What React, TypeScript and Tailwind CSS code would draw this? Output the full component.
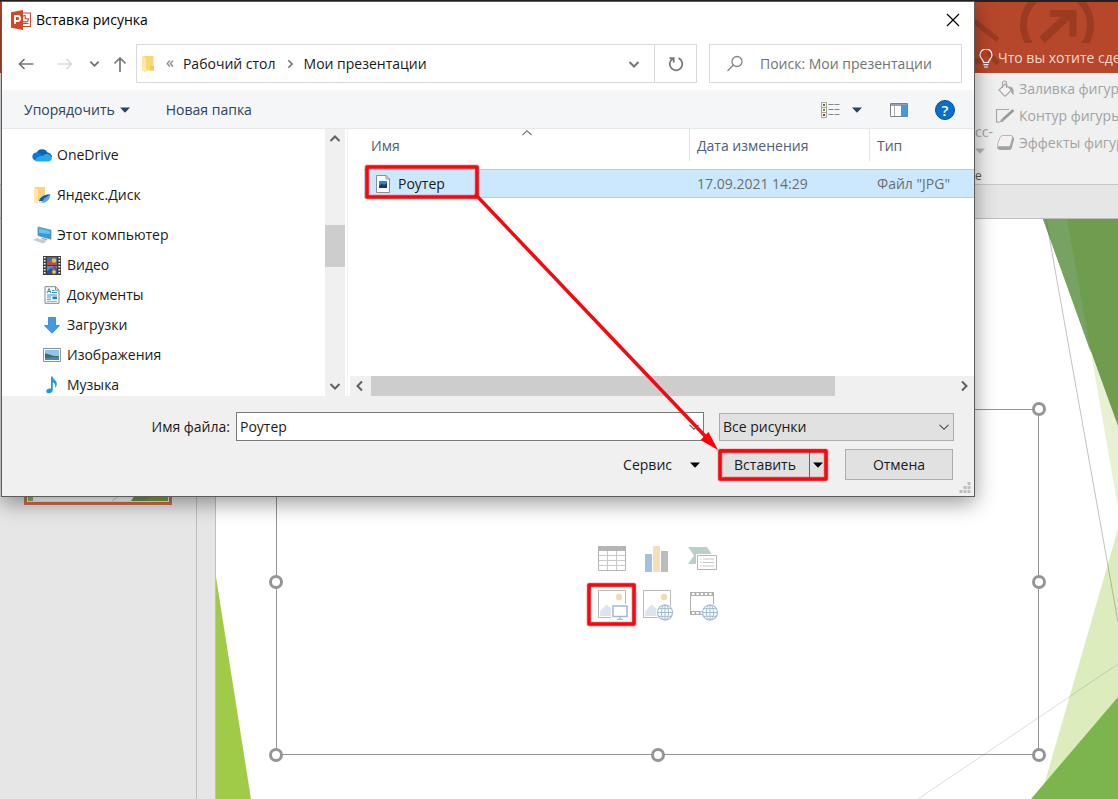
import React from "react";

type IconProps = { className?: string };

const Chevron = ({ className = "" }: IconProps) => (
  <svg viewBox="0 0 12 12" className={`size-3 shrink-0 ${className}`} fill="none" stroke="currentColor" strokeWidth="2" aria-hidden="true">
    <path d="M1.5 4 6 8.500 10.500 4" />
  </svg>
);

const ThinChevron = ({ className = "" }: IconProps) => (
  <svg viewBox="0 0 12 12" className={`size-3 shrink-0 ${className}`} fill="none" stroke="currentColor" strokeWidth="1.1" aria-hidden="true">
    <path d="M1.5 3.8 6 8.3 10.5 3.8" />
  </svg>
);

const Caret = ({ className = "" }: IconProps) => (
  <svg viewBox="0 0 10 6" className={`h-[6px] w-[10px] shrink-0 ${className}`} fill="currentColor" aria-hidden="true">
    <path d="M0 .5h10L5 5.7Z" />
  </svg>
);

const PowerPointIcon = () => (
  <svg viewBox="0 0 20 20" className="size-5 shrink-0" aria-hidden="true">
    <rect x="9.5" y="3" width="10" height="13.5" fill="#fff" stroke="#d24726" />
    <path d="M14.2 5.5v3.2h3.2a3.2 3.2 0 1 1-3.2-3.2Z" fill="none" stroke="#d24726" strokeWidth="1.1" />
    <path d="M12 13.5h5.5" stroke="#d24726" strokeWidth="1.2" />
    <path d="M0 2.2 12 0v20L0 17.8Z" fill="#d24726" />
    <path d="M4 14V6h2.6a2.5 2.5 0 0 1 0 5H4" fill="none" stroke="#fff" strokeWidth="1.8" />
  </svg>
);

const FolderIcon = () => (
  <svg viewBox="0 0 14 18" className="h-[18px] w-[14px] shrink-0" aria-hidden="true">
    <path d="M2 1h10.5v14.5H2Z" fill="#f7d873" />
    <path d="M1 1.5 5 3v14.5L1 15.6Z" fill="#ffe9a2" />
    <path d="M9 11h4v4.5H9Z" fill="#f1ca58" />
  </svg>
);

const OneDriveIcon = () => (
  <svg viewBox="0 0 20 14" className="h-[14px] w-5 shrink-0" aria-hidden="true">
    <path d="M4.5 5a6 6 0 0 1 11-.5c2.5.2 4.5 2 4.5 4.5L10 12 1 9Z" fill="#0364b8" />
    <path d="M4.6 4.4c3 0 5 1.600 7.400 3.600L3 12.500A4.200 4.200 0 0 1 4.600 4.400Z" fill="#0f78d4" />
    <path d="M3 12.500c1-3 4.500-5 8-4.500 2-3 7.500-2.500 8.500 1 1 2-.5 4.400-3 4.400H4.400c-.6 0-1-.3-1.400-.9Z" fill="#28a8ea" />
  </svg>
);

const YandexIcon = () => (
  <svg viewBox="0 0 18 18" className="size-[18px] shrink-0" aria-hidden="true">
    <path d="M2 1h10v14H2Z" fill="#f7d47a" />
    <path d="M1 1.500 5 3v15L1 16Z" fill="#ffe8a8" />
    <path d="M5.500 17C6 11 11 8 17.500 8.500 17 14 12 17.500 5.500 17Z" fill="#cfe6f8" />
    <path d="M6 15c1-4.500 6-7 11.500-6.500-1 2-5 1.500-7 6.500Z" fill="#1358a8" />
    <path d="M9 17c.5-4 4-6.500 8-7-.5 4-3.500 6.500-8 7Z" fill="#55a9e8" />
  </svg>
);

const ComputerIcon = () => (
  <svg viewBox="0 0 20 18" className="h-[18px] w-5 shrink-0" aria-hidden="true">
    <path d="M6 1 19 4.200v9L6 9.600Z" fill="#2d9de0" stroke="#6c8aa0" strokeWidth=".8" />
    <path d="m7 2.200 11 2.800v3L7 7Z" fill="#64c2f3" />
    <path d="m1 14 4-2 10 3-4 2.500Z" fill="#c5cbd2" />
    <path d="M9 11.500 15 13v1.500l-5-1.500Z" fill="#9aa3ad" />
  </svg>
);

const VideoIcon = () => (
  <svg viewBox="0 0 18 19" className="h-[19px] w-[18px] shrink-0" aria-hidden="true">
    <path d="M0 0h18v19H0Z" fill="#3c3c3c" />
    <path d="M1.700 1v18M16.300 1v18" stroke="#eee" strokeWidth="1.800" strokeDasharray="1.600 1.400" />
    <path d="M4 1h10v8H4Z" fill="#3f6db5" />
    <path d="M4 10h10v8H4Z" fill="#4c8be0" />
    <path d="M4 6 7 4l3 2 4 1v2H4Z" fill="#c8463a" />
    <circle cx="11" cy="4.500" r="2.300" fill="#e8c62f" />
    <path d="m4 15 4-3 3 2 3-2v6H4Z" fill="#2c4f96" />
    <circle cx="11" cy="16" r="2" fill="#e8c62f" />
    <path d="m9 12 3-2 2 3Z" fill="#a6302c" />
  </svg>
);

const DocumentIcon = () => (
  <svg viewBox="0 0 16 18" className="h-[18px] w-4 shrink-0" aria-hidden="true">
    <path d="M1 .7h10.500l3.500 3.500v13.100H1Z" fill="#fff" stroke="#808890" />
    <path d="M11.500.7v3.500H15" fill="none" stroke="#808890" />
    <path d="m3 7 2-4.500L7 7M4 5.500h2.500M8 4.500h2.500M8 6.500h5M3 9h10M3 11h4M3 13.200h4" stroke="#2d8fd0" strokeWidth="1" fill="none" />
    <path d="M8.500 10.500H13v2.700H8.500Z" fill="#2d74b8" />
    <path d="M3 15.300h10" stroke="#9aa0a6" />
  </svg>
);

const DownloadIcon = () => (
  <svg viewBox="0 0 16 17" className="h-[17px] w-4 shrink-0" aria-hidden="true">
    <path d="M4.500.5h7v8h4L8 16.300.5 8.500h4Z" fill="#3f9be8" stroke="#2f7fcb" strokeWidth=".8" />
  </svg>
);

const ImagesIcon = () => (
  <svg viewBox="0 0 18 14" className="h-[14px] w-[18px] shrink-0" aria-hidden="true">
    <path d="M.5.5h17v13H.5Z" fill="#fff" stroke="#8b949c" />
    <path d="M2 2h14v10H2Z" fill="#8fc4f0" />
    <path d="M2 5.500c4 0 6 3 14 2.500V12H2Z" fill="#3a6c68" />
    <path d="M2 10c5-1 9-1 14-1v3H2Z" fill="#4a86b8" />
  </svg>
);

const MusicIcon = () => (
  <svg viewBox="0 0 14 18" className="h-[18px] w-[14px] shrink-0" aria-hidden="true">
    <path d="M6 .5h1.600c.4 3 4.400 4 4.200 7.500 0 1.800-.8 3-1.600 4 .4-3-.4-5-2.400-5.800v7.600c0 2-1.800 3.500-4 3.500-1.600 0-2.600-1-2.600-2.100 0-1.800 2.200-3.100 4.800-2.700Z" fill="#1a9be6" />
  </svg>
);

const JpgIcon = () => (
  <svg viewBox="0 0 14 18" className="h-[18px] w-[14px] shrink-0" aria-hidden="true">
    <path d="M.5.5h9.500l3.500 3.500v13.500H.5Z" fill="#fff" stroke="#8a8f94" />
    <path d="M10 .5V4h3.500" fill="none" stroke="#8a8f94" />
    <path d="M3 6h8v7H3Z" fill="#2a8ad8" />
    <path d="m3 11 3-2.500 2 1.500 3-2v5H3Z" fill="#153a6e" />
  </svg>
);

const GlobeShape = () => (
  <g fill="none" stroke="#9fbad6">
    <circle cx="23" cy="22.500" r="7.500" fill="#fff" strokeWidth="1.200" />
    <ellipse cx="23" cy="22.500" rx="3.600" ry="7.500" />
    <path d="M23 15v15M15.500 22.500h15M16.800 18.700h12.400M16.800 26.300h12.400" />
  </g>
);

const TableIcon = () => (
  <svg viewBox="0 0 30 30" className="size-[30px]" aria-hidden="true">
    <path d="M1.500 2.500h27v24h-27Z" fill="#fff" stroke="#b5b5b5" />
    <path d="M1 2h28v5H1Z" fill="#b5b5b5" />
    <path d="M1.500 11.500h27M1.500 16.500h27M1.500 21.500h27M10.500 7v19M19.500 7v19" stroke="#c9c9c9" />
  </svg>
);

const ChartIcon = () => (
  <svg viewBox="0 0 30 30" className="size-[30px]" aria-hidden="true">
    <path d="M3 10h7v18H3Z" fill="#a5bfdc" />
    <path d="M11 2h7v26h-7Z" fill="#f3dfb8" />
    <path d="M19 7h7v21h-7Z" fill="#bcbcbc" />
  </svg>
);

const SmartArtIcon = () => (
  <svg viewBox="0 0 30 30" className="size-[30px]" aria-hidden="true">
    <path d="M1 3h19l5.500 8H14v9H1l6-8.500Z" fill="#b9d0c8" />
    <path d="M9 10h22v17H9Z" fill="#fff" />
    <path d="M10.500 11.500h19v14h-19Z" fill="#fff" stroke="#b5b5b5" />
    <path d="M13 15h1.500M13 18.500h1.500M13 22h1.500M16 15h11M16 18.500h11M16 22h11" stroke="#c6c6c6" />
  </svg>
);

const PictureShape = () => (
  <g>
    <path d="M1.500.5h27v27h-27Z" fill="#fff" stroke="#b9b9b9" />
    <circle cx="22" cy="7" r="3.200" fill="#f1dcb2" />
    <path d="m3 26 .2-5L9.500 14.500 15 19v7Z" fill="#dde4f0" />
  </g>
);

const PictureIcon = () => (
  <svg viewBox="0 0 30 30" className="size-[30px] overflow-visible" aria-hidden="true">
    <PictureShape />
    <path d="M14 14h17v16H14Z" fill="#fff" />
    <path d="M16 16h14v10.500H16Z" fill="#fff" stroke="#9fbad6" strokeWidth="1.600" />
    <path d="M23 27v2M20 29.300h6" stroke="#9fbad6" strokeWidth="1.300" />
  </svg>
);

const OnlinePictureIcon = () => (
  <svg viewBox="0 0 30 30" className="size-[30px] overflow-visible" aria-hidden="true">
    <PictureShape />
    <circle cx="23" cy="22.500" r="9" fill="#fff" />
    <GlobeShape />
  </svg>
);

const FilmIcon = () => (
  <svg viewBox="0 0 30 30" className="size-[30px] overflow-visible" aria-hidden="true">
    <path d="M3.500 2.500h23v22h-23Z" fill="#fff" stroke="#b0b0b0" />
    <path d="M3 2h24v4H3ZM3 21h24v4H3Z" fill="#b0b0b0" />
    <path d="M5 4h21M5 23h21" stroke="#fff" strokeWidth="2" strokeDasharray="2.500 1.800" />
    <circle cx="23.500" cy="22.500" r="9" fill="#fff" />
    <GlobeShape />
  </svg>
);

const folders = [
  { name: "OneDrive", icon: <OneDriveIcon />, style: "pl-[30px] mb-[10px]" },
  { name: "Яндекс.Диск", icon: <YandexIcon />, style: "pl-[30px] mb-[10px]" },
  { name: "Этот компьютер", icon: <ComputerIcon />, style: "pl-[30px]" },
  { name: "Видео", icon: <VideoIcon />, style: "pl-10" },
  { name: "Документы", icon: <DocumentIcon />, style: "pl-10" },
  { name: "Загрузки", icon: <DownloadIcon />, style: "pl-10" },
  { name: "Изображения", icon: <ImagesIcon />, style: "pl-10" },
  { name: "Музыка", icon: <MusicIcon />, style: "pl-10" },
];

const handles = [
  "left-0 top-0",
  "left-1/2 top-0",
  "left-full top-0",
  "left-0 top-1/2",
  "left-full top-1/2",
  "left-0 top-full",
  "left-1/2 top-full",
  "left-full top-full",
];

const inserts = [
  { label: "Вставить таблицу", icon: <TableIcon /> },
  { label: "Вставить диаграмму", icon: <ChartIcon /> },
  { label: "Вставить рисунок SmartArt", icon: <SmartArtIcon /> },
  { label: "Рисунки", icon: <PictureIcon /> },
  { label: "Изображения из Интернета", icon: <OnlinePictureIcon /> },
  { label: "Вставить видео", icon: <FilmIcon /> },
];

function TitleBar() {
  return (
    <header className="relative flex h-[73px] shrink-0 items-end overflow-hidden border-t-2 border-[#222] bg-[#b7472a]">
      <svg viewBox="0 0 144 71" className="absolute top-0 right-0 h-[71px] w-36" fill="none" stroke="#9c3b22" aria-hidden="true">
        <clipPath id="band">
          <path d="M0 0h144v41H0Z" />
        </clipPath>
        <g clipPath="url(#band)">
          <circle cx="83" cy="23" r="33.500" strokeWidth="7" />
          <path d="M68 38 97 11" strokeWidth="8" />
          <path d="M76 11.500h23v23" strokeWidth="7" />
        </g>
        <path d="m0 19 24 19" strokeWidth="5" />
        <path d="m14 50 10 12M0 59h8" strokeWidth="5" />
      </svg>
      <a href="#help" className="relative ml-auto flex h-[30px] w-[143px] items-center gap-[5px] pl-1 text-sm whitespace-nowrap text-[#f6d8ce]">
        <svg viewBox="0 0 14 19" className="h-[19px] w-[14px] shrink-0" fill="none" stroke="#fff" strokeWidth="1.200" aria-hidden="true">
          <path d="M4.500 13.500c0-3-3.500-4-3.500-7.500a6 6 0 0 1 12 0c0 3.500-3.500 4.500-3.500 7.500ZM4.500 15.700h5M5 18h4" />
        </svg>
        Что вы хотите сделать?
      </a>
    </header>
  );
}

function Ribbon() {
  return (
    <div className="flex h-28 shrink-0 justify-end border-b border-[#c6c6c6] bg-[#f0f0f0] text-[#a3a3a3]">
      <div className="flex w-[143px] overflow-hidden">
        <div className="flex w-5 shrink-0 flex-col items-start pt-[49px] leading-5">
          <span className="text-sm">сс-</span>
          <Caret className="mt-[6px] h-1 w-[6px] text-[#b5b5b5]" />
          <span className="mt-[14px] text-xs text-[#555]">е</span>
        </div>
        <div className="flex flex-col gap-[3px] pt-1 text-sm leading-6 whitespace-nowrap">
          <button type="button" className="flex h-6 items-center gap-1">
            <svg viewBox="0 0 20 18" className="h-[18px] w-5" fill="none" stroke="#a8a8a8" strokeWidth="1.200" aria-hidden="true">
              <path d="m10 4 6.500 6L10 16.500 4 10Z" fill="#f7f1f7" />
              <path d="M7.500 8V3a2 2 0 0 1 4 0v5" />
              <path d="M14.500 7c3 0 4 3 3.500 7C17 13 17 11 14.500 7Z" fill="#999" />
            </svg>
            Заливка фигуры
          </button>
          <button type="button" className="flex h-6 items-center gap-1">
            <svg viewBox="0 0 20 18" className="h-[18px] w-5" fill="none" stroke="#a8a8a8" aria-hidden="true">
              <path d="M14 2.500H1.500v12.500H5" strokeWidth="1.200" />
              <path d="M8 12.500 18.500 3" stroke="#999" strokeWidth="2.800" />
              <path d="m5.500 15 1.200-3 1.800 1.800Z" fill="#999" />
            </svg>
            Контур фигуры
          </button>
          <button type="button" className="flex h-6 items-center gap-1">
            <svg viewBox="0 0 20 18" className="h-[18px] w-5" aria-hidden="true">
              <path d="M17 2.500q2.500.5 2 3l-2 8q-.5 2.500-3 2.500H5.500q-3 0-3.500-3Z" fill="#a3a3a3" />
              <path d="M8 1.500h8q2 0 1.500 2l-2 7.500q-.5 1.500-2 1.500H4q-2 0-1.500-2L5 3.500q.7-2 3-2Z" fill="#f4f0f4" stroke="#b0b0b0" strokeWidth=".9" />
            </svg>
            Эффекты фигуры
          </button>
        </div>
      </div>
    </div>
  );
}

function Slide() {
  return (
    <main className="relative ml-[18px] min-w-0 flex-1 border-l border-[#c0c0c0] bg-white">
      <svg viewBox="216 219 902 580" preserveAspectRatio="xMaxYMin slice" className="absolute inset-0 h-full w-full" aria-hidden="true">
        <path d="M216 577v222h35Z" fill="#a0cb48" />
        <path d="M1091 353 1118 425v83Z" fill="#e8f2d3" />
        <path d="M1043 219h75v207Z" fill="#709c4e" />
        <path d="M1043 219h24l24 134Z" fill="#77a362" />
        <path d="M1118 529v270h-78Z" fill="#dcecbd" />
        <path d="M1118 697v102h-87Z" fill="#7cb54e" />
        <path d="m1046 219 72 403" stroke="#606860" strokeOpacity=".4" />
        <path d="m918 799 200-135" stroke="#707870" strokeOpacity=".25" />
      </svg>
      <section className="absolute top-[190px] right-[79px] bottom-11 left-[60px] grid place-items-center border border-[#939393] pr-px">
        <div className="absolute -inset-px">
          {handles.map((place) => (
            <span key={place} className={`absolute size-[14px] -translate-x-1/2 -translate-y-1/2 rounded-full border-[3px] border-[#959595] bg-white ${place}`} />
          ))}
        </div>
        <div className="relative grid grid-cols-3 gap-x-[15px] gap-y-4">
          {inserts.map((item) => (
            <button key={item.label} type="button" aria-label={item.label} className="size-[30px]">
              {item.icon}
            </button>
          ))}
        </div>
      </section>
    </main>
  );
}

function InsertDialog() {
  return (
    <div role="dialog" aria-labelledby="dialog-title" className="absolute top-px left-px flex w-[974px] flex-col border border-[#5c5c5c] bg-white text-sm shadow-[0_6px_20px_rgba(0,0,0,0.4)]">
      <div className="flex h-9 items-center gap-[5px] pr-[14px] pl-[9px]">
        <PowerPointIcon />
        <h1 id="dialog-title" className="flex-1 text-black">Вставка рисунка</h1>
        <button type="button" aria-label="Закрыть">
          <svg viewBox="0 0 14 14" className="size-[14px]" stroke="#000" strokeWidth="1.200" aria-hidden="true">
            <path d="m1 1 12 12M13 1 1 13" />
          </svg>
        </button>
      </div>

      <div className="flex items-center pt-[6px] pr-3 pb-[7px] pl-4 text-[#6e6e6e]">
        <button type="button" aria-label="Назад">
          <svg viewBox="0 0 16 16" className="size-4" fill="none" stroke="#777" strokeWidth="1.700" aria-hidden="true">
            <path d="M15.500 8H1.500M6.500 3l-5 5 5 5" />
          </svg>
        </button>
        <button type="button" aria-label="Вперёд" className="ml-[23px]">
          <svg viewBox="0 0 16 16" className="size-4" fill="none" stroke="#dadada" strokeWidth="1.700" aria-hidden="true">
            <path d="M.5 8h14M9.500 3l5 5-5 5" />
          </svg>
        </button>
        <button type="button" aria-label="Последние расположения" className="ml-4">
          <Chevron className="size-[11px]" />
        </button>
        <button type="button" aria-label="Вверх" className="ml-3">
          <svg viewBox="0 0 16 16" className="size-4" fill="none" stroke="#777" strokeWidth="1.700" aria-hidden="true">
            <path d="M8 16V2M2.500 7.500 8 2l5.500 5.500" />
          </svg>
        </button>
        <nav aria-label="Адрес" className="ml-2 flex h-[39px] flex-1 items-center border border-[#d9d9d9] pl-1 text-[#1a1a1a]">
          <FolderIcon />
          <span className="ml-[11px] pb-[3px] text-base leading-5 text-[#777]">«</span>
          <button type="button" className="ml-[9px]">Рабочий стол</button>
          <Chevron className="mx-[9px] size-[10px] -rotate-90 text-[#777]" />
          <button type="button">Мои презентации</button>
          <button type="button" aria-label="Показать адреса" className="ml-auto px-[14px] text-[#777]">
            <Chevron />
          </button>
          <button type="button" aria-label="Обновить" className="grid h-full w-[42px] place-items-center border-l border-[#d9d9d9]">
            <svg viewBox="0 0 16 16" className="size-4" fill="none" stroke="#777" strokeWidth="1.800" aria-hidden="true">
              <path d="M10.500 2.200A6.300 6.300 0 1 1 4.500 2.800M1.500 2.200h4.200v4.200" />
            </svg>
          </button>
        </nav>
        <label className="ml-3 flex h-[39px] w-[253px] items-center border border-[#d9d9d9] pl-4">
          <svg viewBox="0 0 18 18" className="size-[18px] shrink-0" fill="none" stroke="#858585" strokeWidth="1.300" aria-hidden="true">
            <circle cx="11" cy="6.500" r="5" />
            <path d="M7.300 10 1.500 16" />
          </svg>
          <input aria-label="Поиск" placeholder="Поиск: Мои презентации" className="ml-4 w-full min-w-0 outline-none placeholder:text-[#727272]" />
        </label>
      </div>

      <div className="flex h-[39px] items-center border-b border-[#e6e7e8] bg-[#f4f6f8] pt-[2px] pr-[19px] pl-[22px] text-[#2b4262]">
        <button type="button" className="flex items-center gap-[5px]">
          Упорядочить
          <Caret className="h-[5px] w-2" />
        </button>
        <button type="button" className="ml-9">Новая папка</button>
        <button type="button" aria-label="Вид" className="ml-auto flex items-center gap-3">
          <svg viewBox="0 0 19 16" className="h-4 w-[19px]" fill="none" aria-hidden="true">
            <path d="M.5.500h5v15h-5ZM.5 5.500h5M.5 10.500h5" stroke="#a5a595" />
            <path d="M2 2h2v2H2Z" fill="#4b7c4b" />
            <path d="M2 7h2v2H2Z" fill="#5f963f" />
            <path d="M2 12h2v2H2Z" fill="#a3352b" />
            <path d="M7.500 2.500h11M7.500 7.500h11M7.500 12.500h11" stroke="#858585" strokeDasharray="5 1" />
          </svg>
          <Caret className="h-[5px] w-2" />
        </button>
        <button type="button" aria-label="Область просмотра" className="ml-7">
          <svg viewBox="0 0 18 14" className="h-[14px] w-[18px]" aria-hidden="true">
            <path d="M.5.5h17v13H.5Z" fill="#fff" stroke="#7b8288" />
            <path d="M1 1h16v2H1Z" fill="#9aa1a7" />
            <path d="M4.500 3v10" stroke="#aab" />
            <path d="M11 2h6.500v11.500H11Z" fill="#3f9ae6" />
          </svg>
        </button>
        <button type="button" aria-label="Справка" className="ml-[27px] grid size-5 place-items-center rounded-full border border-[#0a4c8c] bg-[#0a6ed0] text-[15px] leading-none font-semibold text-white">
          ?
        </button>
      </div>

      <div className="flex h-[267px]">
        <ul className="flex-1 overflow-hidden pt-[11px] text-[#1a1a1a]">
          {folders.map((folder) => (
            <li key={folder.name} className={folder.style}>
              <button type="button" className="flex h-[30px] items-center gap-[5px]">
                <span className="flex w-5 justify-center">{folder.icon}</span>
                {folder.name}
              </button>
            </li>
          ))}
        </ul>
        <div className="flex w-5 flex-col items-center bg-[#f0f0f0] text-[#606060]">
          <Chevron className="mt-1 rotate-180" />
          <div className="mt-20 h-[42px] w-full bg-[#cdcdcd]" />
          <Chevron className="mt-auto mb-1" />
        </div>
        <div className="ml-[2px] flex w-[627px] flex-col border-l border-[#f0f0f0]">
          <div className="relative flex-1 pl-4">
            <ThinChevron className="absolute top-[-2px] left-[173px] rotate-180 text-[#666]" />
            <table className="w-full table-fixed border-collapse text-left">
              <thead className="text-[#4c607a]">
                <tr>
                  <th className="w-[326px] p-0 pb-2 font-normal">
                    <div className="flex h-8 items-center border-r border-[#e2e2e2] pt-[2px] pl-[7px]">Имя</div>
                  </th>
                  <th className="w-[180px] p-0 pb-2 font-normal">
                    <div className="flex h-8 items-center border-r border-[#e2e2e2] pt-[2px] pl-[7px]">Дата изменения</div>
                  </th>
                  <th className="p-0 pb-2 font-normal">
                    <div className="flex h-8 items-center pt-[2px] pl-[7px]">Тип</div>
                  </th>
                </tr>
              </thead>
              <tbody>
                <tr className="h-7 border-y border-[#a5d2ee] bg-[#cce8ff] text-[#6d6d6d]">
                  <td className="p-0 pl-3">
                    <div className="flex items-center gap-2 text-[#1a1a1a]">
                      <JpgIcon />
                      Роутер
                    </div>
                  </td>
                  <td className="p-0 pl-[7px]">17.09.2021 14:29</td>
                  <td className="p-0 pl-[7px]">Файл "JPG"</td>
                </tr>
              </tbody>
            </table>
          </div>
          <div className="ml-[2px] flex h-5 items-center bg-[#f0f0f0] text-[#606060]">
            <Chevron className="ml-1 rotate-90" />
            <div className="ml-[5px] h-full w-[464px] bg-[#cdcdcd]" />
            <Chevron className="mr-1 ml-auto -rotate-90" />
          </div>
        </div>
      </div>

      <div className="flex flex-col gap-2 bg-[#f0f0f0] pt-4 pb-4 text-[#1a1a1a]">
        <div className="flex h-[29px] items-center justify-end pr-5">
          <label htmlFor="file-name">Имя файла:</label>
          <div className="relative ml-[6px] h-full w-[468px]">
            <input id="file-name" defaultValue="Роутер" className="h-full w-full border border-[#7a7a7a] bg-white pr-6 pl-[3px] outline-none" />
            <ThinChevron className="absolute top-[9px] right-1 text-[#555]" />
          </div>
          <div className="relative ml-[15px] h-[28px] w-[235px]">
            <select aria-label="Тип файлов" className="h-full w-full appearance-none border border-[#adadad] bg-[#e1e1e1] pl-[3px] outline-none">
              <option>Все рисунки</option>
            </select>
            <ThinChevron className="pointer-events-none absolute top-2 right-1 text-[#444]" />
          </div>
        </div>
        <div className="flex h-[31px] items-center justify-end pr-[21px]">
          <button type="button" className="flex items-center gap-[18px]">
            Сервис
            <Caret className="text-black" />
          </button>
          <div className="ml-5 flex h-full w-[107px] border border-[#555] bg-[#e1e1e1]">
            <button type="button" className="flex-1">Вставить</button>
            <button type="button" aria-label="Варианты вставки" className="grid w-[17px] place-items-center border-l border-[#666]">
              <Caret className="w-3 text-black" />
            </button>
          </div>
          <button type="button" className="ml-[18px] h-full w-[108px] border border-[#adadad] bg-[#e1e1e1]">Отмена</button>
        </div>
      </div>
      <svg viewBox="0 0 12 12" className="absolute right-[3px] bottom-[2px] size-3" fill="#bdbdbd" aria-hidden="true">
        <path d="M8.500 0h3v3h-3ZM4.500 4h3v3h-3ZM8.500 4h3v3h-3ZM.5 8h3v3h-3ZM4.500 8h3v3h-3ZM8.500 8h3v3h-3Z" />
      </svg>
    </div>
  );
}

function Callouts() {
  return (
    <svg width="1118" height="799" viewBox="0 0 1118 799" className="pointer-events-none absolute top-0 left-0" fill="none" aria-hidden="true">
      <g stroke="#ff5a5a" strokeOpacity=".5" strokeWidth="5" strokeLinejoin="round">
        <path d="M367 167h110v30H367ZM720 451h106v28H720ZM589 585h45v39h-45Z" />
      </g>
      <g stroke="#f20a10" strokeWidth="3.500" strokeLinejoin="round">
        <path d="M367 167h110v30H367ZM720 451h106v28H720ZM589 585h45v39h-45Z" />
        <path d="m475 194 231 243" />
      </g>
      <path d="M718 450 700.500 440l8-8Z" fill="#ff0000" />
    </svg>
  );
}

export default function App() {
  return (
    <div className="relative flex h-screen flex-col overflow-hidden bg-[#e6e6e6] font-['Open_Sans','Noto_Sans',sans-serif]">
      <TitleBar />
      <Ribbon />
      <div className="h-[34px] shrink-0 border-b border-[#bdbdbd]" />
      <div className="flex min-h-0 flex-1">
        <aside className="w-[197px] shrink-0 border-r border-[#bdbdbd] pt-[203px] pl-6">
          <div className="h-[83px] w-[148px] border-[3px] border-[#d06f50] bg-[#fbe9dc] p-px">
            <svg viewBox="0 0 140 75" className="h-full w-full" aria-hidden="true">
              <path d="M0 0h140v75H0Z" fill="#fff" />
              <path d="M0 46v29h5Z" fill="#a0cb48" />
              <path d="M0 40v35h5V60Z" fill="#8fba50" />
              <path d="m84 75 22-16" stroke="#c8c8c8" />
              <path d="M103 75 140 20v55Z" fill="#6b9a4a" />
              <path d="M118 75 140 55v20Z" fill="#7ca832" />
            </svg>
          </div>
        </aside>
        <Slide />
      </div>
      <InsertDialog />
      <Callouts />
    </div>
  );
}
